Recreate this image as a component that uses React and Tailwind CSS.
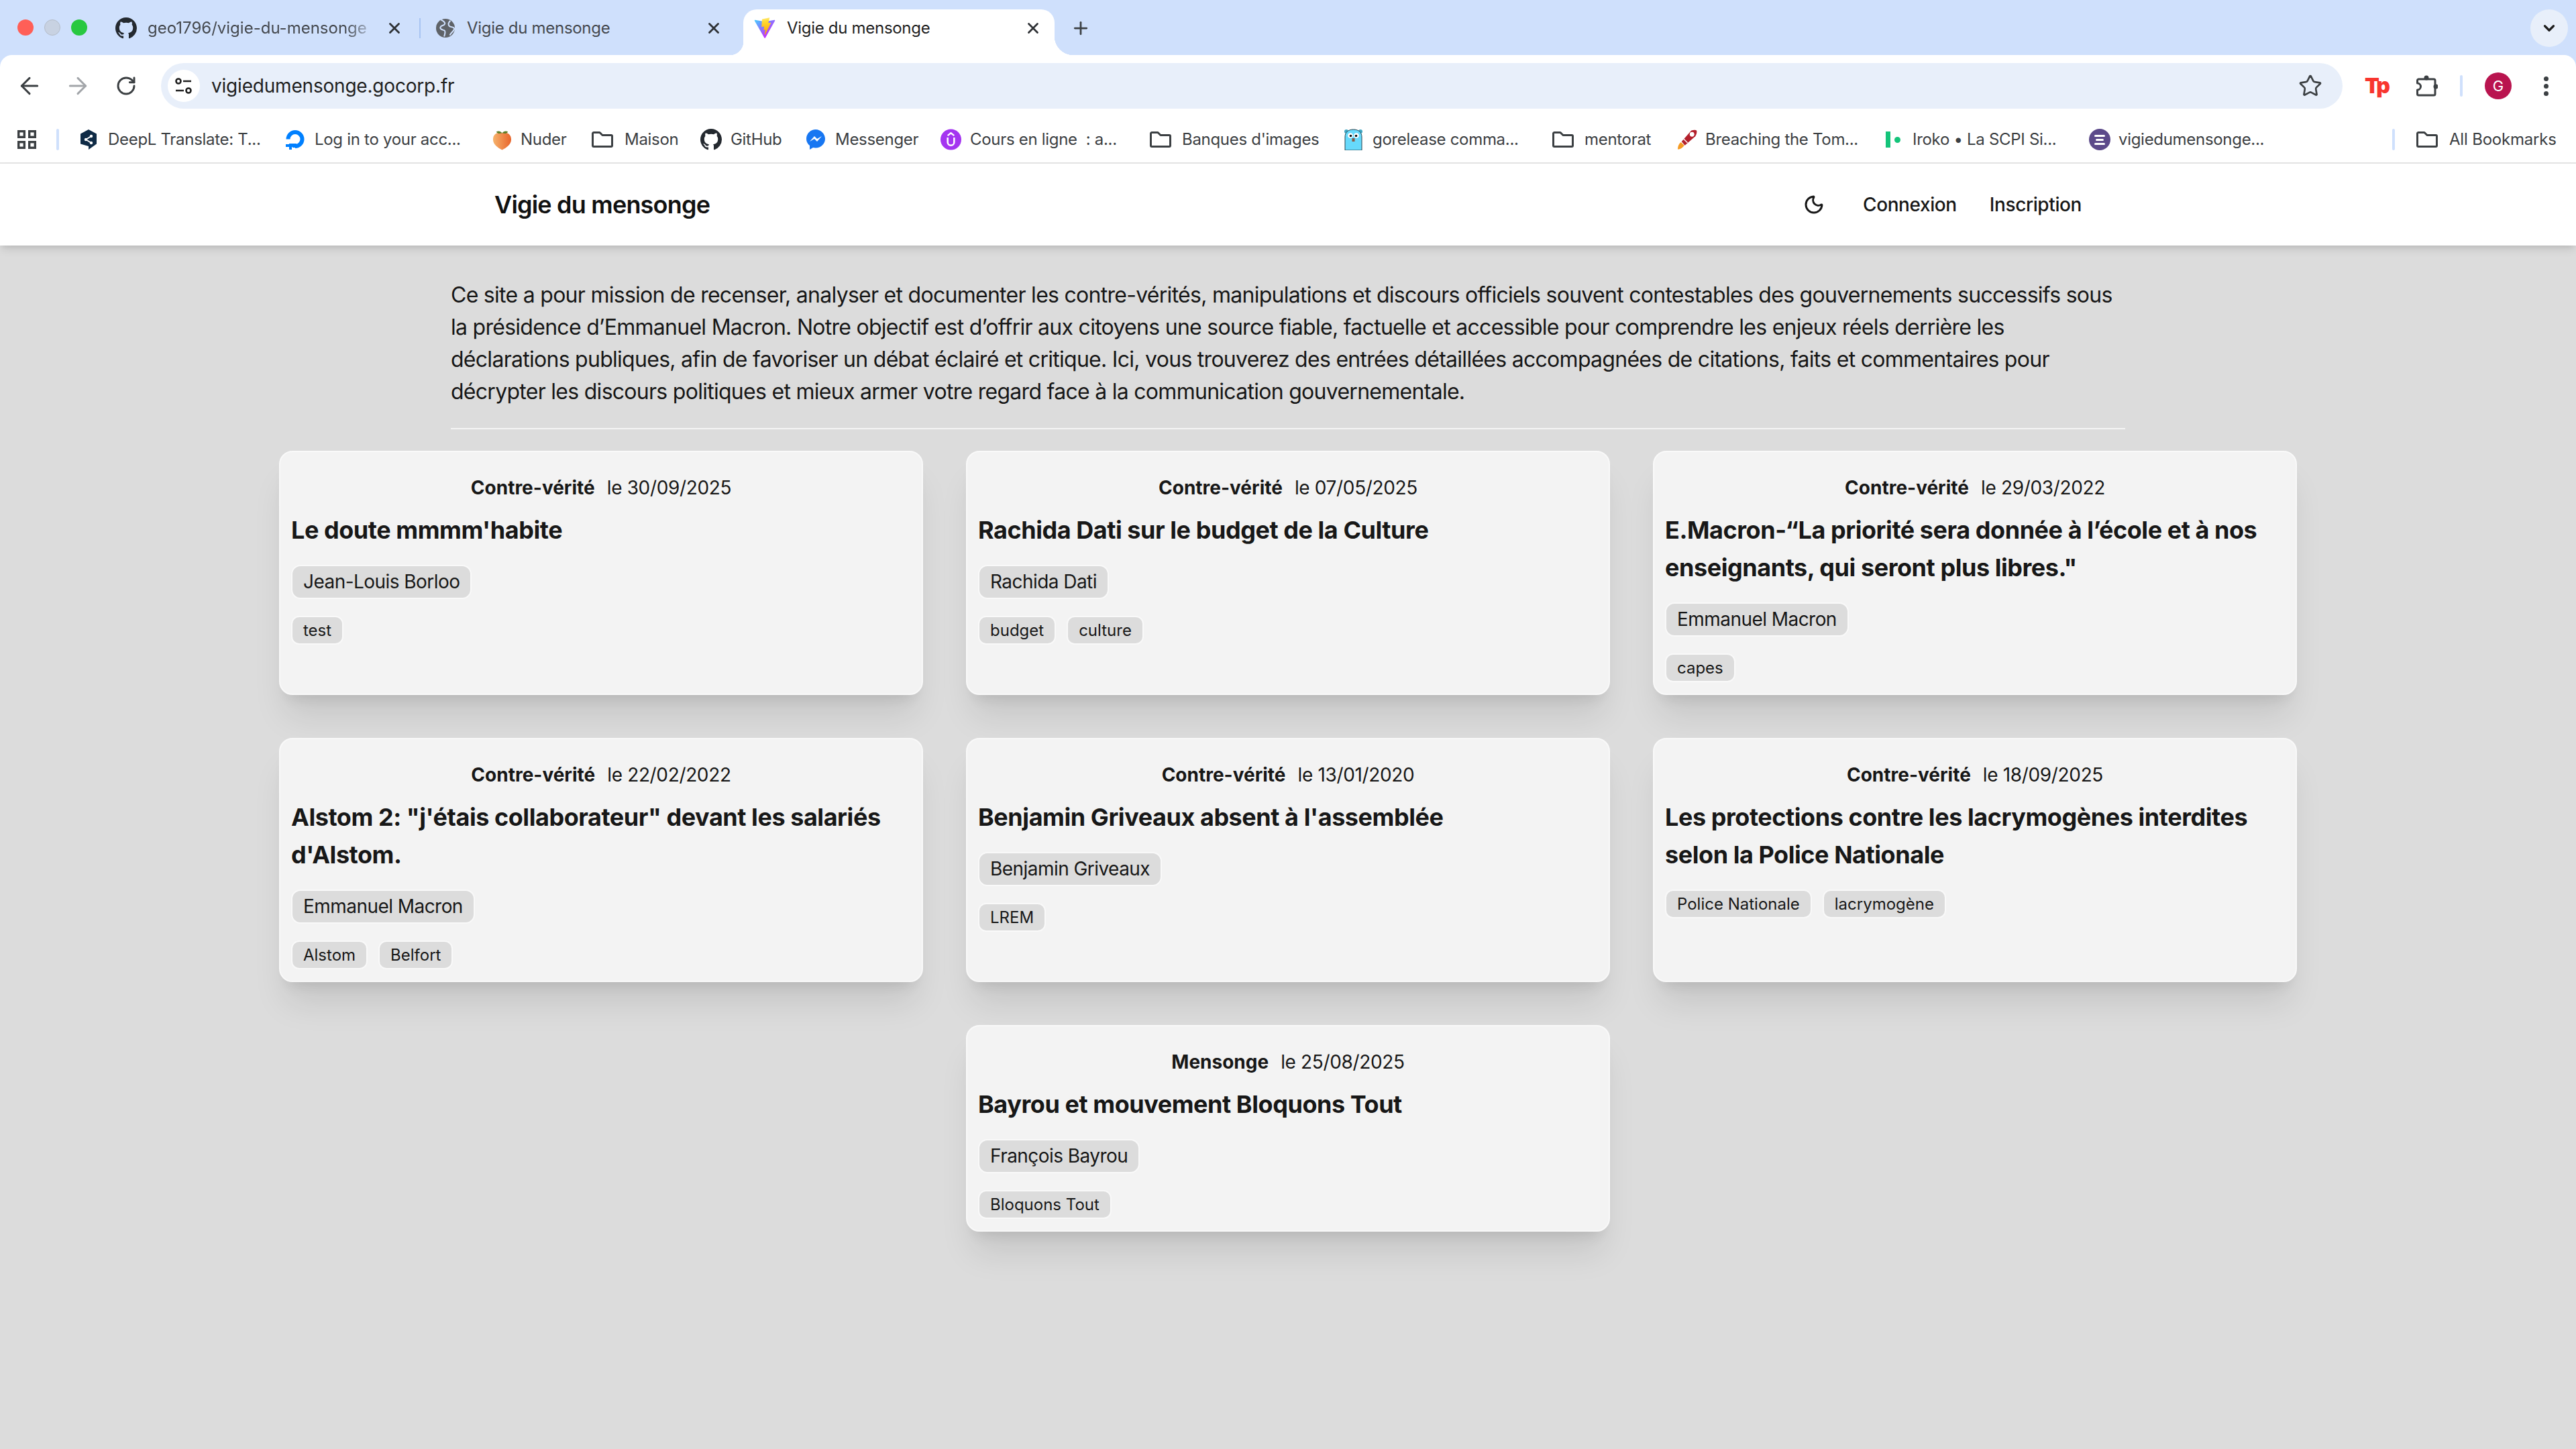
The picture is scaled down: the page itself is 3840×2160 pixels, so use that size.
import { Moon, ArrowLeft, ArrowRight, RotateCw, Star, ChevronDown, Plus, X } from 'lucide-react';

const GitHubMark = ({ size = 32 }) => (
  <svg width={size} height={size} viewBox="0 0 16 16" fill="#24292f" className="flex-none">
    <path d="M8 0C3.58 0 0 3.58 0 8c0 3.54 2.29 6.53 5.47 7.59.4.07.55-.17.55-.38 0-.19-.01-.82-.01-1.49-2.01.37-2.53-.49-2.69-.94-.09-.23-.48-.94-.82-1.13-.28-.15-.68-.52-.01-.53.63-.01 1.08.58 1.23.82.72 1.21 1.87.87 2.33.66.07-.52.28-.87.51-1.07-1.78-.2-3.64-.89-3.64-3.95 0-.87.31-1.59.82-2.15-.08-.2-.36-1.02.08-2.12 0 0 .67-.21 2.2.82.64-.18 1.32-.27 2-.27s1.36.09 2 .27c1.53-1.04 2.2-.82 2.2-.82.44 1.1.16 1.92.08 2.12.51.56.82 1.27.82 2.15 0 3.07-1.87 3.75-3.65 3.95.29.25.54.73.54 1.48 0 1.07-.01 1.93-.01 2.2 0 .21.15.46.55.38A8.01 8.01 0 0 0 16 8c0-4.42-3.58-8-8-8Z" />
  </svg>
);

const GlobeIcon = () => (
  <svg width="28" height="28" viewBox="0 0 30 30" className="flex-none">
    <circle cx="15" cy="15" r="15" fill="#5f6368" />
    <path d="M8 1.5c3 2 7 3 6 6.5s-6 2-7 5.5 3 4 6 5 1 6 0 10M23 3c-3 2-4 6-2 8.5s7 .5 8 4-5 6-7 11" fill="none" stroke="#cfe0fc" strokeWidth="2.2" />
  </svg>
);

const ViteIcon = () => (
  <svg width="32" height="32" viewBox="0 0 410 404" className="flex-none">
    <defs>
      <linearGradient id="vite-a" x1="6" y1="33" x2="235" y2="344" gradientUnits="userSpaceOnUse">
        <stop stopColor="#41d1ff" />
        <stop offset="1" stopColor="#bd34fe" />
      </linearGradient>
      <linearGradient id="vite-b" x1="194" y1="8" x2="236" y2="292" gradientUnits="userSpaceOnUse">
        <stop stopColor="#ffea83" />
        <stop offset="0.2" stopColor="#ffdd35" />
        <stop offset="1" stopColor="#ffa800" />
      </linearGradient>
    </defs>
    <path d="M399.6 59.5 215.9 388.2c-3.8 6.8-13.6 6.8-17.5.1L11 59.5c-4.2-7.4 2.1-16.3 10.5-14.8l183.9 32.9c1.2.2 2.4.2 3.6 0l180-32.8c8.3-1.5 14.7 7.3 10.6 14.7Z" fill="url(#vite-a)" />
    <path d="M292.9 1.6 156.9 28.2c-2.2.4-3.9 2.3-4 4.6l-8.4 141.3c-.2 3.3 2.9 5.9 6.1 5.2l37.9-8.8c3.5-.8 6.7 2.3 6 5.9l-11.3 55.2c-.8 3.7 2.7 6.9 6.3 5.8l23.4-7.1c3.6-1.1 7.1 2.1 6.3 5.8l-17.9 86.6c-1.1 5.4 6.1 8.4 9.1 3.7l2-3.1 110.9-221.3c1.9-3.7-1.3-7.9-5.4-7.1l-39 7.5c-3.7.7-6.8-2.7-5.8-6.3l25.5-88.2c1-3.7-2.1-7.1-5.8-6.4Z" fill="url(#vite-b)" />
  </svg>
);

const SiteInfoIcon = () => (
  <svg width="26" height="24" viewBox="0 0 26 24" fill="none" stroke="#1f1f1f" strokeWidth="2.6" className="flex-none">
    <circle cx="5" cy="5" r="3.5" />
    <path d="M12 5h12M1 19h12" />
    <circle cx="20" cy="19" r="3.5" />
  </svg>
);

const AppsIcon = () => (
  <svg width="28" height="28" viewBox="0 0 28 28" fill="none" stroke="#3c4043" strokeWidth="3.4" className="flex-none">
    <rect x="1.7" y="1.7" width="8.6" height="8.6" />
    <rect x="17.7" y="1.7" width="8.6" height="8.6" />
    <rect x="1.7" y="17.7" width="8.6" height="8.6" />
    <rect x="17.7" y="17.7" width="8.6" height="8.6" />
  </svg>
);

const ExtensionIcon = () => (
  <svg width="32" height="32" viewBox="0 0 32 32" fill="none" className="flex-none">
    <path d="M3.5 6H26a2 2 0 0 1 2 2v20a2 2 0 0 1-2 2H3.5a2 2 0 0 1-2-2v-6a5 5 0 0 0 0-10V8a2 2 0 0 1 2-2Z" stroke="#3c4043" strokeWidth="3" strokeLinejoin="round" />
    <circle cx="15" cy="4" r="3.5" fill="#3c4043" />
    <circle cx="29" cy="17" r="3.5" fill="#3c4043" />
  </svg>
);

const DeepLIcon = () => (
  <svg width="24" height="30" viewBox="0 0 24 30" className="flex-none">
    <path d="M12 0 24 6.5v15L12 30v-5L0 21.5v-15Z" fill="#0f2b46" />
    <path d="m8 15 8-5M8 15l8 5" stroke="#fff" strokeWidth="1.8" />
    <circle cx="8" cy="15" r="2.2" fill="#fff" />
    <circle cx="16" cy="10" r="2.2" fill="#fff" />
    <circle cx="16" cy="20" r="2.2" fill="#fff" />
  </svg>
);

const DoIcon = () => (
  <svg width="32" height="32" viewBox="0 0 32 32" className="flex-none">
    <path d="M16 26a10.5 10.5 0 1 0-10.5-10.5" fill="none" stroke="#0080ff" strokeWidth="6" />
    <path d="M18 22h-6v6h6Zm-6 0H7v5h5Zm-1 5H7v4h4ZM7 23H2v4h5Z" fill="#0080ff" />
  </svg>
);

const PeachIcon = () => (
  <svg width="29" height="32" viewBox="0 0 30 32" className="flex-none">
    <defs>
      <linearGradient id="peach" x1="0" y1="0" x2="1" y2="0">
        <stop stopColor="#f6b26b" />
        <stop offset="1" stopColor="#e8652c" />
      </linearGradient>
    </defs>
    <path d="M15 6c8-2 14 2 14 10 0 8-8 13-14 16C9 29 1 24 1 16 1 8 7 4 15 6Z" fill="url(#peach)" />
    <path d="M15 6C13 3 9 2 6 4c2 3 5 3 9 2Zm0 0c2-3 6-4 9-2-2 3-5 3-9 2Z" fill="#5f7f2a" />
  </svg>
);

const MessengerIcon = () => (
  <svg width="28" height="32" viewBox="0 0 28 32" className="flex-none">
    <path d="M14 1C6.5 1 0 7 0 15c0 4 1.8 7.5 5 10v6l5-3c1.3.3 2.7.5 4 .5 7.5 0 14-6 14-13.5S21.5 1 14 1Z" fill="#1877f2" />
    <path d="m5 19 7-8 4 4 7-4-7 8-4-4Z" fill="#fff" />
  </svg>
);

const UdemyIcon = () => (
  <svg width="31" height="32" viewBox="0 0 32 32" className="flex-none">
    <circle cx="16" cy="16" r="16" fill="#a435f0" />
    <path d="M11 13v7a5 5 0 0 0 10 0v-7" fill="none" stroke="#fff" strokeWidth="2.6" />
    <path d="m11 10 5-4 5 4" fill="none" stroke="#fff" strokeWidth="2.4" />
  </svg>
);

const GopherIcon = () => (
  <svg width="29" height="32" viewBox="0 0 29 32" className="flex-none">
    <circle cx="4" cy="4" r="3" fill="#3fa7c4" />
    <circle cx="25" cy="4" r="3" fill="#3fa7c4" />
    <path d="M2 32V12C2 5 7 1 14.5 1S27 5 27 12v20Z" fill="#66d9fb" stroke="#27424d" strokeWidth="1" />
    <circle cx="10" cy="10" r="3.8" fill="#fff" />
    <circle cx="19" cy="10" r="3.8" fill="#fff" />
    <circle cx="10.5" cy="10.5" r="1.8" fill="#111" />
    <circle cx="18.5" cy="10.5" r="1.8" fill="#111" />
    <rect x="12.5" y="14" width="4" height="5" fill="#8a5a44" />
  </svg>
);

const RocketIcon = () => (
  <svg width="31" height="32" viewBox="0 0 32 32" className="flex-none">
    <path d="M2 31c0-5 2-9 5-11l5 5c-2 3-5 6-10 6Z" fill="#f59a23" />
    <path d="M8 19 23 2c3-1 7-1 8 0 1 2 0 6-2 9L13 25Z" fill="#b3202c" />
    <circle cx="24" cy="8" r="3.5" fill="#fff" />
    <path d="m11 15 6 6" stroke="#fff" strokeWidth="1.5" />
  </svg>
);

const IrokoIcon = () => (
  <span className="flex w-[24px] flex-none items-center gap-[6px]">
    <span className="h-[24px] w-[7px] bg-[#14c47a]" />
    <span className="h-[9px] w-[9px] rounded-full bg-[#14c47a]" />
  </span>
);

const VigieIcon = () => (
  <span className="flex h-[32px] w-[32px] flex-none flex-col items-center justify-center gap-[3px] rounded-full bg-[#5c4a8a]">
    <span className="h-[3px] w-[16px] rounded-full bg-white" />
    <span className="h-[3px] w-[12px] rounded-full bg-white" />
    <span className="h-[3px] w-[16px] rounded-full bg-white" />
  </span>
);

const FolderIcon = () => (
  <svg width="32" height="24" viewBox="0 0 32 24" fill="none" stroke="#3c4043" strokeWidth="3" strokeLinejoin="round" className="flex-none">
    <path d="M3 1.5h9l4 4h13a1.5 1.5 0 0 1 1.5 1.5v14a1.5 1.5 0 0 1-1.5 1.5H3A1.5 1.5 0 0 1 1.5 21V3A1.5 1.5 0 0 1 3 1.5Z" />
  </svg>
);

const bookmarks = [
  { icon: <DeepLIcon />, label: 'DeepL Translate: T...', w: 'w-[304px]', gap: 'gap-[17px]' },
  { icon: <DoIcon />, label: 'Log in to your acc...', w: 'w-[310px]', gap: 'gap-[13px]' },
  { icon: <PeachIcon />, label: 'Nuder', w: 'w-[148px]', gap: 'gap-[13px]' },
  { icon: <FolderIcon />, label: 'Maison', w: 'w-[162px]', gap: 'gap-[17px]' },
  { icon: <GitHubMark />, label: 'GitHub', w: 'w-[158px]', gap: 'gap-[13px]' },
  { icon: <MessengerIcon />, label: 'Messenger', w: 'w-[200px]', gap: 'gap-[15px]' },
  { icon: <UdemyIcon />, label: 'Cours en ligne  : a...', w: 'w-[312px]', gap: 'gap-[13px]' },
  { icon: <FolderIcon />, label: "Banques d'images", w: 'w-[289px]', gap: 'gap-[16px]' },
  { icon: <GopherIcon />, label: 'gorelease comma...', w: 'w-[311px]', gap: 'gap-[14px]' },
  { icon: <FolderIcon />, label: 'mentorat', w: 'w-[185px]', gap: 'gap-[16px]' },
  { icon: <RocketIcon />, label: 'Breaching the Tom...', w: 'w-[312px]', gap: 'gap-[12px]' },
  { icon: <IrokoIcon />, label: 'Iroko • La SCPI Si...', w: 'w-[303px]', gap: 'gap-[16px]' },
  { icon: <VigieIcon />, label: 'vigiedumensonge...', w: 'w-[280px]', gap: 'gap-[12px]' },
];

const cards = [
  { kind: 'Contre-vérité', date: '30/09/2025', title: "Le doute mmmm'habite", person: 'Jean-Louis Borloo', tags: ['test'] },
  { kind: 'Contre-vérité', date: '07/05/2025', title: 'Rachida Dati sur le budget de la Culture', person: 'Rachida Dati', tags: ['budget', 'culture'] },
  { kind: 'Contre-vérité', date: '29/03/2022', title: 'E.Macron-“La priorité sera donnée à l’école et à nos enseignants, qui seront plus libres."', person: 'Emmanuel Macron', tags: ['capes'] },
  { kind: 'Contre-vérité', date: '22/02/2022', title: 'Alstom 2: "j\'étais collaborateur" devant les salariés d\'Alstom.', person: 'Emmanuel Macron', tags: ['Alstom', 'Belfort'] },
  { kind: 'Contre-vérité', date: '13/01/2020', title: "Benjamin Griveaux absent à l'assemblée", person: 'Benjamin Griveaux', tags: ['LREM'] },
  { kind: 'Contre-vérité', date: '18/09/2025', title: 'Les protections contre les lacrymogènes interdites selon la Police Nationale', tags: ['Police Nationale', 'lacrymogène'] },
  { kind: 'Mensonge', date: '25/08/2025', title: 'Bayrou et mouvement Bloquons Tout', person: 'François Bayrou', tags: ['Bloquons Tout'] },
];

function Tab({ icon, label, className, textClass }) {
  return (
    <div className={`flex h-[68px] flex-none items-center pb-[12px] ${className}`}>
      {icon}
      <span className={`flex-1 overflow-hidden whitespace-nowrap text-[24px] ${textClass}`}>{label}</span>
      <X size={26} strokeWidth={2.6} color="#2f3236" className="ml-[10px] flex-none" />
    </div>
  );
}

function BrowserChrome() {
  return (
    <div className="bg-[#cfe0fc]">
      <div className="flex h-[82px] items-end">
        <div className="flex h-[68px] flex-none items-center gap-[16px] pb-[14px] pl-[26px] pr-[18px]">
          <span className="h-[24px] w-[24px] rounded-full bg-[#ff5f57]" />
          <span className="h-[24px] w-[24px] rounded-full border border-[#b4bcc8] bg-[#c8d2e2]" />
          <span className="h-[24px] w-[24px] rounded-full bg-[#28c840]" />
        </div>
        <Tab icon={<GitHubMark />} label="geo1796/vigie-du-mensonge" className="w-[477px] pl-[24px] pr-[24px]" textClass="ml-[16px] text-[#45494f] mask-r-from-[85%]" />
        <span className="mb-[25px] h-[30px] w-[2px] flex-none bg-[#a8c4f2]" />
        <Tab icon={<GlobeIcon />} label="Vigie du mensonge" className="w-[481px] pl-[23px] pr-[31px]" textClass="ml-[18px] tracking-[-0.3px] text-[#45494f]" />
        <div className="relative flex-none rounded-t-[20px] bg-white">
          <span className="absolute bottom-0 left-[-20px] h-[20px] w-[20px] bg-[radial-gradient(circle_at_0_0,transparent_20px,white_20.5px)]" />
          <span className="absolute bottom-0 right-[-28px] h-[28px] w-[28px] bg-[radial-gradient(circle_at_100%_0,transparent_28px,white_28.5px)]" />
          <Tab icon={<ViteIcon />} label="Vigie du mensonge" className="w-[464px] pl-[16px] pr-[19px]" textClass="ml-[17px] tracking-[-0.3px] text-[#1f1f1f]" />
        </div>
        <Plus size={30} strokeWidth={2.2} color="#3c4043" className="mb-[25px] ml-[24px] flex-none" />
        <div className="mb-[12px] ml-auto mr-[12px] flex h-[56px] w-[56px] items-center justify-center rounded-full bg-[#e8effa]">
          <ChevronDown size={26} strokeWidth={3} color="#1f1f1f" />
        </div>
      </div>
      <div className="rounded-t-[18px] bg-white">
        <div className="flex h-[92px] items-center pl-[24px]">
          <ArrowLeft size={40} strokeWidth={1.8} color="#3c4043" className="flex-none" />
          <ArrowRight size={40} strokeWidth={1.8} color="#a3a6aa" className="ml-[32px] flex-none" />
          <RotateCw size={32} strokeWidth={2.2} color="#3c4043" className="ml-[36px] flex-none" />
          <div className="ml-[36px] flex h-[68px] w-[3252px] flex-none items-center rounded-full bg-[#e8effa] pl-[10px] pr-[30px]">
            <span className="flex h-[48px] w-[48px] flex-none items-center justify-center rounded-full bg-white">
              <SiteInfoIcon />
            </span>
            <span className="ml-[17px] text-[28px] tracking-[-0.2px] text-[#1f1f1f]">vigiedumensonge.gocorp.fr</span>
            <Star size={36} strokeWidth={1.8} color="#3c4043" className="ml-auto" />
          </div>
          <span className="ml-[33px] w-[34px] flex-none text-[32px] font-black leading-none tracking-[-3px] text-[#f8362f]">Tp</span>
          <span className="ml-[43px] flex-none">
            <ExtensionIcon />
          </span>
          <span className="ml-[33px] h-[32px] w-[4px] flex-none rounded-full bg-[#cfe0fc]" />
          <span className="ml-[33px] flex h-[40px] w-[40px] flex-none items-center justify-center rounded-full bg-[#b9144f] text-[22px] text-white">G</span>
          <span className="ml-[48px] flex flex-none flex-col gap-[4px]">
            <span className="h-[7px] w-[7px] rounded-full bg-[#3c4043]" />
            <span className="h-[7px] w-[7px] rounded-full bg-[#3c4043]" />
            <span className="h-[7px] w-[7px] rounded-full bg-[#3c4043]" />
          </span>
        </div>
        <div className="flex h-[68px] items-center pl-[26px]">
          <AppsIcon />
          <span className="ml-[30px] mr-[32px] h-[32px] w-[4px] flex-none rounded-full bg-[#cfe0fc]" />
          {bookmarks.map((b) => (
            <div key={b.label} className={`flex flex-none items-center ${b.gap} ${b.w}`}>
              {b.icon}
              <span className="whitespace-pre text-[24px] tracking-[-0.3px] text-[#3c4043]">{b.label}</span>
            </div>
          ))}
          <span className="ml-[172px] h-[32px] w-[4px] flex-none rounded-full bg-[#cfe0fc]" />
          <div className="ml-[32px] flex flex-none items-center gap-[17px]">
            <FolderIcon />
            <span className="whitespace-nowrap text-[24px] tracking-[-0.2px] text-[#3c4043]">All Bookmarks</span>
          </div>
        </div>
      </div>
    </div>
  );
}

function Card({ card }) {
  return (
    <article className="flex w-[960px] flex-col rounded-[20px] border-2 border-[#f9f9f9] bg-[#f3f3f3] px-[16px] pb-[17px] pt-[33px] shadow-[0_40px_50px_-10px_rgba(0,0,0,0.1),0_16px_20px_-12px_rgba(0,0,0,0.1)]">
      <div className="flex justify-center gap-[18px] text-[28px] leading-[40px] text-[#171717]">
        <span className="font-bold">{card.kind}</span>
        <span className="tracking-[-0.35px]">le {card.date}</span>
      </div>
      <h2 className="mt-[15px] text-[36px] font-bold leading-[56px] tracking-[-0.45px] text-[#171717]">{card.title}</h2>
      {card.person && (
        <div className="mt-[24px] flex">
          <span className="rounded-[14px] border-2 border-[#f9f9f9] bg-[#dcdcdc] px-[16px] text-[28px] leading-[47px] tracking-[-0.55px] text-[#171717]">{card.person}</span>
        </div>
      )}
      <div className={`flex gap-[16px] ${card.person ? 'mt-[25px]' : 'mt-[24px]'}`}>
        {card.tags.map((t) => (
          <span key={t} className="rounded-[12px] border-2 border-[#f9f9f9] bg-[#dcdcdc] px-[16px] text-[24px] leading-[39px] text-[#171717]">{t}</span>
        ))}
      </div>
    </article>
  );
}

export default function App() {
  return (
    <div className="flex min-h-[2160px] flex-col bg-[#dcdcdc] font-['Inter',sans-serif]">
      <BrowserChrome />
      <header className="relative flex h-[124px] items-center justify-between border-t-2 border-[#e3e3e3] bg-white px-[737px] shadow-[0_8px_12px_-2px_rgba(0,0,0,0.1),0_4px_8px_-4px_rgba(0,0,0,0.1)]">
        <span className="text-[36px] font-semibold tracking-[-0.8px] text-[#111]">Vigie du mensonge</span>
        <div className="flex items-center">
          <Moon size={32} strokeWidth={2.2} color="#171717" />
          <span className="ml-[57px] text-[28px] font-medium tracking-[-0.4px] text-[#171717]">Connexion</span>
          <span className="ml-[49px] text-[28px] font-medium tracking-[-0.4px] text-[#171717]">Inscription</span>
        </div>
      </header>
      <main className="flex flex-col items-center pt-[50px]">
        <p className="w-[2496px] text-[32px] leading-[48px] tracking-[-0.72px] text-[#171717]">
          Ce site a pour mission de recenser, analyser et documenter les contre-vérités, manipulations et discours officiels souvent contestables des gouvernements successifs sous la présidence d’Emmanuel Macron. Notre objectif est d’offrir aux citoyens une source fiable, factuelle et accessible pour comprendre les enjeux réels derrière les déclarations publiques, afin de favoriser un débat éclairé et critique. Ici, vous trouverez des entrées détaillées accompagnées de citations, faits et commentaires pour décrypter les discours politiques et mieux armer votre regard face à la communication gouvernementale.
        </p>
        <hr className="mt-[30px] w-[2496px] border-t-2 border-[#f5f5f5]" />
        <div className="mt-[32px] flex w-[3008px] flex-wrap justify-center gap-[64px]">
          {cards.map((c) => (
            <Card key={c.title} card={c} />
          ))}
        </div>
      </main>
    </div>
  );
}
